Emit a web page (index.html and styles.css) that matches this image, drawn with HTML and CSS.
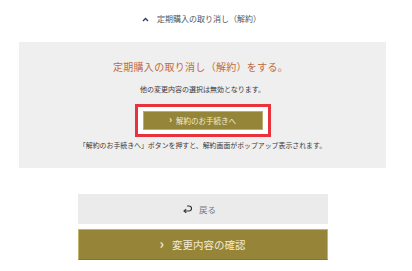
FILE: index.html
```html
<!DOCTYPE html>
<html lang="ja">
<head>
    <meta charset="UTF-8">
    <meta name="viewport" content="width=device-width, initial-scale=1.0">
    <title>定期購入の取り消し</title>
    <link rel="stylesheet" href="styles.css">
</head>
<body>
    <div class="page">
        <!-- Toggle header -->
        <div class="toggle">
            <svg class="toggle-icon" width="7" height="5" viewBox="0 0 7 5"><path d="M1 4 L3.5 1.5 L6 4" fill="none" stroke="#2c3a66" stroke-width="1.3"/></svg>
            <span>定期購入の取り消し（解約）</span>
        </div>

        <!-- Cancel panel -->
        <div class="panel">
            <h2 class="panel-title">定期購入の取り消し（解約）をする。</h2>
            <p class="panel-text">他の変更内容の選択は無効となります。</p>
            <div class="highlight">
                <button class="btn-cancel"><span class="chev">&rsaquo;</span>解約のお手続きへ</button>
            </div>
            <p class="panel-note">「解約のお手続きへ」ボタンを押すと、解約画面がポップアップ表示されます。</p>
        </div>

        <!-- Actions -->
        <div class="actions">
            <button class="btn-back">
                <svg width="9" height="8" viewBox="0 0 9 8"><path d="M4 1 H6 A2.5 2.5 0 0 1 6 6 H1.5" fill="none" stroke="#333" stroke-width="1.2"/><path d="M3.2 4.2 L1 6 L3.2 7.8" fill="none" stroke="#333" stroke-width="1.1"/></svg>
                戻る
            </button>
            <button class="btn-confirm"><span class="chev">&rsaquo;</span>変更内容の確認</button>
        </div>
    </div>
</body>
</html>
```

FILE: styles.css
```css
* {
    margin: 0;
    padding: 0;
    box-sizing: border-box;
}

body {
    font-family: "Noto Sans CJK JP", "Noto Sans", sans-serif;
    background: #ffffff;
    color: #444444;
}

.page {
    width: 405px;
}

/* Toggle header */
.toggle {
    height: 42px;
    padding-top: 13px;
    display: flex;
    justify-content: center;
    align-items: flex-start;
    gap: 8px;
    font-size: 8px;
    line-height: 12px;
    color: #555555;
    margin-left: -2px;
}

.toggle-icon {
    margin-top: 4px;
}

/* Panel */
.panel {
    width: 367px;
    margin: 0 auto;
    background: #efefef;
    padding: 18px 0 17px;
    display: flex;
    flex-direction: column;
    align-items: center;
}

.panel-title {
    font-size: 10px;
    line-height: 14px;
    font-weight: 400;
    color: #c06a42;
    letter-spacing: 0.3px;
    margin-left: -4px;
}

.panel-text {
    font-size: 7px;
    line-height: 12px;
    margin-top: 9px;
    color: #3a3a3a;
}

.highlight {
    margin-top: 9px;
    border: 3px solid #e8333d;
    background: #ffffff;
    padding: 4px 5px;
}

.btn-cancel {
    width: 120px;
    height: 19px;
    background: #958538;
    border: 1px solid #bcae6a;
    color: #f3ead0;
    font-family: inherit;
    font-size: 7.5px;
    display: flex;
    align-items: center;
    justify-content: center;
    gap: 4px;
}

.panel-note {
    font-size: 6.9px;
    line-height: 12px;
    margin-top: 2px;
    color: #3a3a3a;
}

/* Bottom buttons */
.actions {
    width: 250px;
    margin: 26px auto 0;
    display: flex;
    flex-direction: column;
    gap: 5px;
}

.btn-back {
    height: 30px;
    background: #ebebeb;
    border: none;
    color: #777777;
    font-family: inherit;
    font-size: 8.5px;
    display: flex;
    align-items: center;
    justify-content: center;
    gap: 7px;
    padding-right: 6px;
}

.btn-confirm {
    height: 31px;
    background: #968538;
    border: 1px solid #c3b46e;
    border-bottom-color: #85752c;
    color: #f3ead0;
    font-family: inherit;
    font-size: 10.5px;
    display: flex;
    align-items: center;
    justify-content: center;
    gap: 8px;
}

.chev {
    font-size: 1.3em;
    line-height: 1;
    font-weight: 700;
    margin-top: -2px;
}
```
